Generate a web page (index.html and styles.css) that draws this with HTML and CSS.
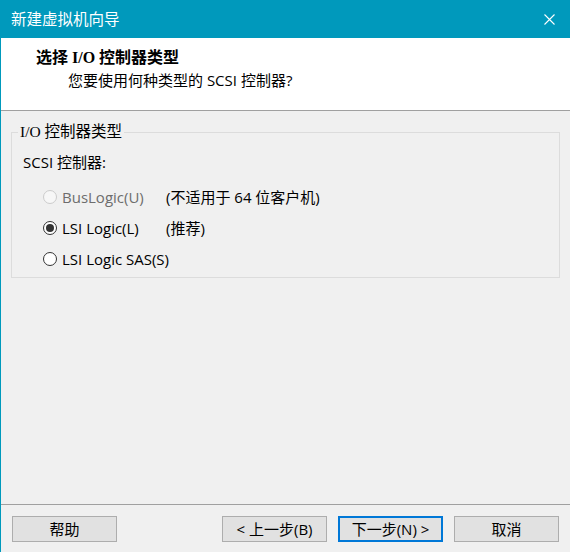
FILE: index.html
```html
<!DOCTYPE html>
<html lang="zh-CN">
  <head>
    <meta charset="utf-8">
    <title>新建虚拟机向导</title>
    <link rel="stylesheet" href="styles.css">
  </head>
<body>
	<div class="window">
		<div class="titlebar">
			<span class="title">新建虚拟机向导</span>
			<span class="close">
				<svg width="11" height="11" viewBox="0 0 11 11">
					<path d="M0.5 0.5 L10.5 10.5 M10.5 0.5 L0.5 10.5" stroke="#fff" stroke-width="1.1" fill="none"/>
				</svg>
			</span>
		</div>

		<div class="header">
			<h1>选择 I/O 控制器类型</h1>
			<p>您要使用何种类型的 SCSI 控制器?</p>
		</div>

		<div class="content">
			<fieldset class="group">
				<legend>I/O 控制器类型</legend>
				<div class="group-label">SCSI 控制器:</div>
				<div class="option disabled">
					<span class="radio"></span>
					<span class="opt-name">BusLogic(U)</span>
					<span class="opt-note">(不适用于 64 位客户机)</span>
				</div>
				<div class="option">
					<span class="radio checked"></span>
					<span class="opt-name">LSI Logic(L)</span>
					<span class="opt-note">(推荐)</span>
				</div>
				<div class="option">
					<span class="radio"></span>
					<span class="opt-name">LSI Logic SAS(S)</span>
				</div>
			</fieldset>
		</div>

		<div class="footer">
			<button class="btn">帮助</button>
			<div class="spacer"></div>
			<button class="btn">&lt; 上一步(B)</button>
			<button class="btn btn-default">下一步(N) &gt;</button>
			<button class="btn">取消</button>
		</div>
	</div>
</body>
</html>
```

FILE: styles.css
```css
* {
    padding: 0;
    margin: 0;
    box-sizing: border-box;
}
body {
    background: #f0f0f0;
    font-family: "Open Sans", "Noto Sans CJK SC", sans-serif;
    font-size: 15px;
    color: #000;
}
.window {
    width: 570px;
    height: 552px;
    display: flex;
    flex-direction: column;
    border-left: 1px solid #0099bc;
    overflow: hidden;
}

/* 标题栏 */
.titlebar {
    height: 38px;
    background: #0099bc;
    color: #fff;
    display: flex;
    align-items: center;
    justify-content: space-between;
    padding: 0 15px 0 11px;
    margin-left: -1px;
}
.titlebar .title {
    line-height: 20px;
    font-size: 15.5px;
}
.titlebar .close {
    display: flex;
    width: 11px;
    height: 11px;
}

/* 顶部说明 */
.header {
    height: 73px;
    background: #fff;
    border-bottom: 1px solid #a0a0a0;
    padding: 9px 0 0 35px;
}
.header h1 {
    font-size: 16px;
    font-weight: bold;
    line-height: 21px;
    font-family: "Liberation Serif", "Noto Sans CJK SC", serif;
}
.header p {
    margin: 2px 0 0 32px;
    line-height: 20px;
}

/* 中间内容 */
.content {
    flex: 1;
    padding: 11px 10px 0 10px;
}
.group {
    border: 1px solid #dcdcdc;
    padding: 0 11px 3px 11px;
}
.group legend {
    margin-left: -5px;
    padding: 0 2px;
    line-height: 20px;
    font-family: "Liberation Serif", "Noto Sans CJK SC", serif;
    font-size: 15.5px;
}
.group-label {
    margin-top: 10px;
    line-height: 20px;
    margin-bottom: 9px;
}
.option {
    height: 31px;
    display: flex;
    align-items: center;
    padding-left: 20px;
    white-space: nowrap;
}
.option .radio {
    flex-shrink: 0;
    width: 14px;
    height: 14px;
    border: 1px solid #333;
    border-radius: 50%;
    background: #fff;
    margin-right: 5px;
    position: relative;
}
.option .radio.checked::after {
    content: "";
    position: absolute;
    left: 2px;
    top: 2px;
    width: 8px;
    height: 8px;
    border-radius: 50%;
    background: #333;
}
.option .opt-name {
    flex-shrink: 0;
    min-width: 104px;
}
.option.disabled .radio {
    border-color: #cccccc;
    background: #f7f7f7;
}
.option.disabled .opt-name {
    color: #6d6d6d;
}

/* 底部按钮 */
.footer {
    height: 48px;
    border-top: 1px solid #a0a0a0;
    padding: 11px 11px 0 11px;
    display: flex;
    align-items: flex-start;
    gap: 11px;
}
.footer .spacer {
    flex: 1;
}
.btn {
    width: 105px;
    height: 26px;
    background: #e1e1e1;
    border: 1px solid #adadad;
    font-family: "Open Sans", "Noto Sans CJK SC", sans-serif;
    font-size: 15px;
    color: #000;
    line-height: 22px;
}
.btn.btn-default {
    border: 2px solid #0078d7;
}
```
